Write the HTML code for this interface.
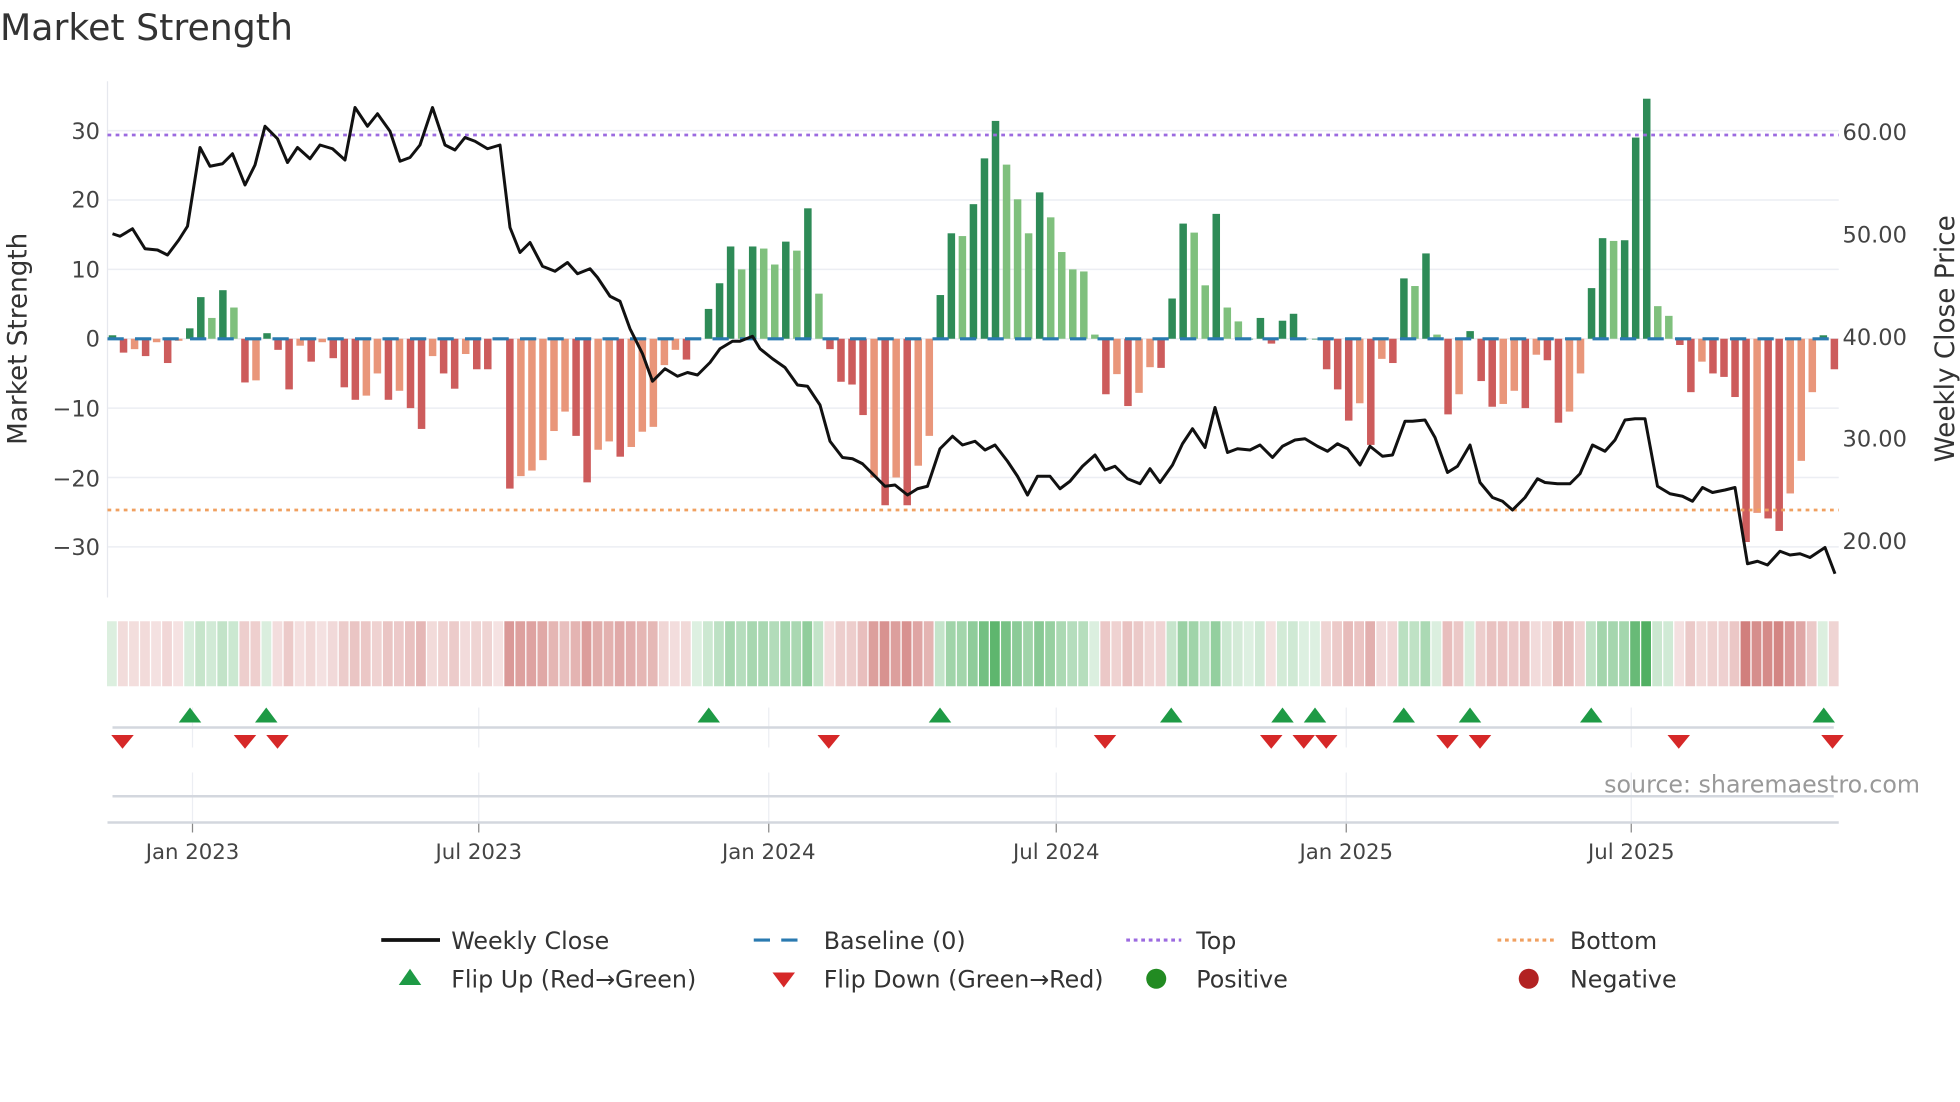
<!DOCTYPE html>
<html><head><meta charset="utf-8">
<style>
html,body{margin:0;padding:0;background:#fff;}
svg{display:block;}
text{font-family:"DejaVu Sans","Liberation Sans",sans-serif;}
</style></head>
<body>
<svg id="s" xmlns="http://www.w3.org/2000/svg" width="1960" height="1102" viewBox="0 0 1568 881.6">
<rect width="1568" height="882" fill="#fff"/>
<text x="0" y="32" font-size="29" fill="#333">Market Strength</text>
<g id="g"></g>
<text transform="translate(21,271) rotate(-90)" text-anchor="middle" font-size="21" fill="#333">Market Strength</text>
<text transform="translate(1563,271) rotate(-90)" text-anchor="middle" font-size="21" fill="#333">Weekly Close Price</text>
<g font-size="18" fill="#444" text-anchor="end">
<text x="80" y="111">30</text><text x="80" y="166">20</text><text x="80" y="222">10</text>
<text x="80" y="277">0</text><text x="80" y="333">−10</text><text x="80" y="389">−20</text><text x="80" y="444">−30</text>
</g>
<g font-size="18" fill="#444">
<text x="1474" y="112">60.00</text><text x="1474" y="194">50.00</text><text x="1474" y="276">40.00</text>
<text x="1474" y="357">30.00</text><text x="1474" y="439">20.00</text>
</g>
<g font-size="17" fill="#444" text-anchor="middle">
<text x="154" y="687">Jan 2023</text><text x="383" y="687">Jul 2023</text><text x="615" y="687">Jan 2024</text>
<text x="845" y="687">Jul 2024</text><text x="1077" y="687">Jan 2025</text><text x="1305" y="687">Jul 2025</text>
</g>
<text x="1536" y="634" font-size="19" fill="#999" text-anchor="end">source: sharemaestro.com</text>
<g font-size="19" fill="#333">
<line x1="305" y1="752" x2="352" y2="752" stroke="#111" stroke-width="3"/>
<text x="361" y="759">Weekly Close</text>
<line x1="603" y1="752" x2="646" y2="752" stroke="#2a7ab0" stroke-width="2.5" stroke-dasharray="13,9"/>
<text x="659" y="759">Baseline (0)</text>
<line x1="901" y1="752" x2="945" y2="752" stroke="#9c6be0" stroke-width="2.5" stroke-dasharray="3,3"/>
<text x="957" y="759">Top</text>
<line x1="1198" y1="752" x2="1243" y2="752" stroke="#f0a060" stroke-width="2.5" stroke-dasharray="3,3"/>
<text x="1256" y="759">Bottom</text>
<polygon points="319,788 337,788 328,775" fill="#1e9a45"/>
<text x="361" y="790">Flip Up (Red→Green)</text>
<polygon points="618,778 636,778 627,790" fill="#d62828"/>
<text x="659" y="790">Flip Down (Green→Red)</text>
<circle cx="925" cy="783" r="8" fill="#228b22"/>
<text x="957" y="790">Positive</text>
<circle cx="1223" cy="783" r="8" fill="#b22222"/>
<text x="1256" y="790">Negative</text>
</g>
</svg>
<script>
(function(){
var NS="http://www.w3.org/2000/svg",g=document.getElementById("g");
function el(t,a){var e=document.createElementNS(NS,t);for(var k in a)e.setAttribute(k,a[k]);g.appendChild(e);return e;}
[30,20,10,0,-10,-20,-30].forEach(function(v){var y=271-5.55*v;el("line",{x1:86,x2:1471,y1:y,y2:y,stroke:"#eceef3","stroke-width":1.2});});
el("line",{x1:86,x2:86,y1:65,y2:478,stroke:"#e6e8ee","stroke-width":1});
var B=[[0.5,0],[-2,0],[-1.5,1],[-2.5,0],[-0.5,1],[-3.5,0],[-0.3,1],[1.5,0],[6,0],[3,1],[7,0],[4.5,1],[-6.3,0],[-6,1],[0.8,0],[-1.6,0],[-7.3,0],[-1,1],[-3.3,0],[-0.5,1],[-2.8,0],[-7,0],[-8.8,0],[-8.2,1],[-5,1],[-8.8,0],[-7.5,1],[-10,0],[-13,0],[-2.5,1],[-5,0],[-7.2,0],[-2.2,1],[-4.4,0],[-4.4,0],[-0.2,1],[-21.6,0],[-19.8,1],[-19,1],[-17.5,1],[-13.3,1],[-10.5,1],[-14,0],[-20.7,0],[-16,1],[-14.8,1],[-17,0],[-15.6,1],[-13.4,1],[-12.7,1],[-3.8,1],[-1.6,1],[-3,0],[0.1,1],[4.3,0],[8,0],[13.3,0],[10,1],[13.3,0],[13,1],[10.7,1],[14,0],[12.7,1],[18.8,0],[6.5,1],[-1.5,0],[-6.2,0],[-6.6,0],[-11,0],[-20,1],[-24,0],[-20,1],[-24,0],[-18.3,1],[-14,1],[6.3,0],[15.2,0],[14.8,1],[19.4,0],
[26,0],[31.4,0],[25.1,1],[20.1,1],[15.2,1],[21.1,0],[17.5,1],[12.5,1],[10,1],[9.7,1],[0.6,1],[-8,0],[-5.1,1],[-9.7,0],[-7.8,1],[-4.1,1],[-4.2,0],[5.8,0],[16.6,0],[15.3,1],[7.7,1],[18,0],[4.5,1],[2.5,1],[0,0],[3,0],[-0.7,0],[2.6,0],[3.6,0],[0,0],[0,0],[-4.4,0],[-7.3,0],[-11.8,0],[-9.3,1],[-15.3,0],[-2.9,1],[-3.5,0],[8.7,0],[7.6,1],[12.3,0],[0.6,1],[-10.9,0],[-8,1],[1.1,0],[-6.1,0],[-9.8,0],[-9.4,1],[-7.5,1],[-10,0],[-2.3,1],[-3.1,0],[-12.1,0],[-10.5,1],[-5,1],[7.3,0],[14.5,0],[14.1,1],[14.2,0],[29,0],[34.6,0],[4.7,1],[3.3,1],[-0.9,0],[-7.7,0],[-3.3,1],[-5,0],[-5.5,0],[-8.4,0],[-29.3,0],[-25.1,1],[-25.9,0],[-27.7,0],[-22.3,1],[-17.6,1],[-7.7,1],[0.5,0],[-4.4,0]];
var n=B.length,dx=1377.5/(n-1);
B.forEach(function(b,i){var x=90+i*dx,v=b[0],y0=271,y1=271-5.55*v;
 var c=v>=0?(b[1]?"#7fc07d":"#2e8b57"):(b[1]?"#e9967a":"#cd5c5c");
 el("rect",{x:x-3,y:Math.min(y0,y1),width:6,height:Math.max(Math.abs(y1-y0),0.6),fill:c});
 var a=Math.min(0.16+Math.abs(v)/32*0.62,0.85);
 el("rect",{x:x-4.4,y:497,width:7.8,height:52,fill:v>=0?"#2ea043":"#c0504d","fill-opacity":a});
});
el("line",{x1:86,x2:1471,y1:271,y2:271,stroke:"#2a7ab0","stroke-width":2.5,"stroke-dasharray":"13,9"});
el("line",{x1:86,x2:1471,y1:108,y2:108,stroke:"#9c6be0","stroke-width":2.2,"stroke-dasharray":"3,3.5"});
el("line",{x1:86,x2:1471,y1:408,y2:408,stroke:"#f0a060","stroke-width":2.2,"stroke-dasharray":"3,3.5"});
var P="90,187 96,189 106,183 116,199 126,200 134,204 143,192 150,181 160,118 168,133 178,131 186,123 196,148 204,132 212,101 222,111 230,130 238,118 248,127 256,116 266,119 276,128 284,86 294,101 302,91 312,105 320,129 328,126 336,116 346,86 356,116 364,120 372,110 380,113 390,119 400,116 408,182 416,202 424,194 434,213 444,217 454,210 462,219 472,215 478,222 488,237 496,241 504,263 514,283 522,305 532,295 542,301 550,298 558,300 568,290 576,279 586,273 592,273 602,269 608,279 618,287 628,294 638,308 646,309 656,324 664,353 674,366 682,367 690,371 700,381 708,389 716,388 726,396 734,391 742,389 752,359 762,349 770,356 780,353 788,360 796,356 806,369 814,381 822,396 830,381 840,381 848,391 856,385 866,373 876,364 884,376 892,373 902,383 912,387 920,375 928,386 938,372 946,355 954,343 964,358 972,326 982,362 990,359 1000,360 1008,356 1018,366 1026,357 1036,352 1044,351 1054,357 1062,361 1070,355 1078,359 1088,372 1096,357 1106,365 1114,364 1124,337 1130,337 1140,336 1148,350 1158,378 1166,373 1176,356 1184,386 1194,398 1202,401 1210,408 1220,398 1230,383 1236,386 1246,387 1256,387 1264,379 1274,356 1284,361 1292,352 1300,336 1308,335 1316,335 1326,389 1336,395 1346,397 1354,401 1362,390 1370,394 1380,392 1388,390 1398,451 1406,449 1414,452 1424,441 1432,444 1440,443 1448,446 1460,438 1468,459";
el("polyline",{points:P,fill:"none",stroke:"#111","stroke-width":2.4,"stroke-linejoin":"round"});
[154,383,615,845,1077,1305].forEach(function(x){
 el("line",{x1:x,x2:x,y1:566,y2:598,stroke:"#eceef3","stroke-width":1});
 el("line",{x1:x,x2:x,y1:618,y2:658,stroke:"#eceef3","stroke-width":1});
 el("line",{x1:x,x2:x,y1:658,y2:666,stroke:"#888","stroke-width":1});
});
el("line",{x1:90,x2:1467,y1:582,y2:582,stroke:"#d3d7de","stroke-width":2});
el("line",{x1:90,x2:1467,y1:637,y2:637,stroke:"#d3d7de","stroke-width":2});
el("line",{x1:86,x2:1471,y1:658,y2:658,stroke:"#d3d7de","stroke-width":2});
[152,213,567,752,937,1026,1052,1123,1176,1273,1459].forEach(function(x){
 el("polygon",{points:(x-9)+",578 "+(x+9)+",578 "+x+",566",fill:"#1e9a45"});});
[98,196,222,663,884,1017,1043,1061,1158,1184,1343,1466].forEach(function(x){
 el("polygon",{points:(x-9)+",588 "+(x+9)+",588 "+x+",599",fill:"#d62828"});});
})();
</script>
</body></html>
